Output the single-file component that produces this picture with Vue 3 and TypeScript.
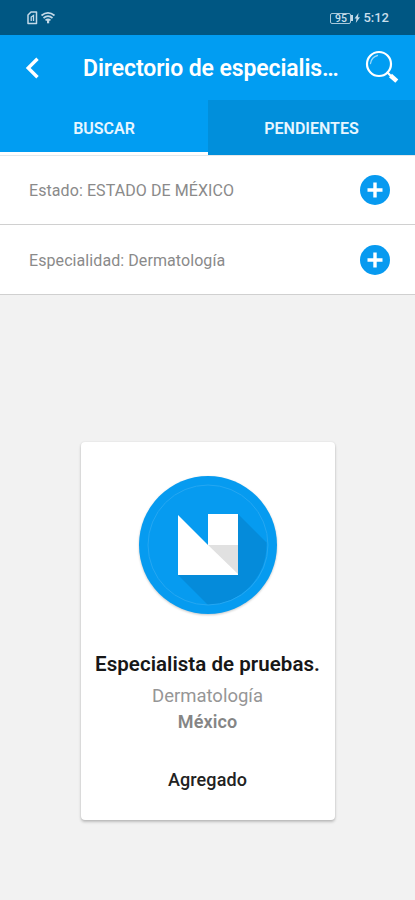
<script setup lang="ts">
import { ref } from 'vue'

type Tab = 'buscar' | 'pendientes'

interface Filter {
  label: string
  value: string
}

const activeTab = ref<Tab>('buscar')
const tabs: { id: Tab; label: string }[] = [
  { id: 'buscar', label: 'BUSCAR' },
  { id: 'pendientes', label: 'PENDIENTES' },
]
const filters: Filter[] = [
  { label: 'Estado', value: 'ESTADO DE MÉXICO' },
  { label: 'Especialidad', value: 'Dermatología' },
]
</script>

<template>
  <div class="screen">
    <div class="status">
      <svg class="status-left" width="30" height="14" viewBox="0 0 30 14" fill="none" stroke="#c3d9e8">
        <path d="M4 1h5.500v11.500h-8.500v-8.500z" stroke-width="1.500" stroke-linejoin="round" />
        <path d="M4.200 10V6L6.500 4.500V10" stroke-width="1.300" />
        <path d="M14.500 4.500Q21 -.8 27.500 4.500M16.500 7Q21 3.400 25.500 7M18.500 9.300Q21 7.300 23.500 9.300" stroke-width="1.700" />
        <path d="M20 8.500h2.200v3.800h-2.200z" fill="#c3d9e8" stroke="none" />
      </svg>
      <div class="status-right">
        <span class="battery">95</span>
        <svg width="10" height="10" viewBox="0 0 10 10" fill="#c3d9e8">
          <path d="M0 2h2v6H0zM7.500 0L3.500 5.500h2L4.800 10 9 4.200H7z" />
        </svg>
        <span class="clock">5:12</span>
      </div>
    </div>

    <header class="bar">
      <button class="icon-btn back" aria-label="Atrás">
        <svg width="16" height="24" viewBox="0 0 16 24" fill="none" stroke="#fff" stroke-width="3.400">
          <path d="M12.500 2.800L3.200 12l9.300 9.200" />
        </svg>
      </button>
      <h1 class="title">Directorio de especialis…</h1>
      <button class="icon-btn search" aria-label="Buscar">
        <svg width="36" height="36" viewBox="0 0 36 36" fill="none" stroke="#fff" stroke-linecap="round">
          <circle cx="14" cy="14" r="12" stroke-width="2.200" />
          <path d="M5.500 13.500Q6.500 7 12.500 5.500" stroke-width="1.300" opacity=".6" />
          <path d="M22.500 22.500l3 3" stroke-width="2.200" />
          <path d="M25.500 25.500l6.300 5.700" stroke-width="4.400" stroke-linecap="butt" />
        </svg>
      </button>
    </header>

    <nav class="tabs">
      <button
        v-for="tab in tabs"
        :key="tab.id"
        :class="['tab', tab.id, { active: tab.id === activeTab }]"
        @click="activeTab = tab.id"
      ><span>{{ tab.label }}</span></button>
    </nav>

    <div class="filters">
      <div v-for="filter in filters" :key="filter.label" class="filter">
        <span class="filter-text">{{ filter.label }}: {{ filter.value }}</span>
        <svg width="30" height="30" viewBox="0 0 30 30">
          <circle cx="15" cy="15" r="15" fill="#079af0" />
          <path d="M15 7.500v15M7.500 15h15" stroke="#fff" stroke-width="3.400" />
        </svg>
      </div>
    </div>

    <main class="content">
      <article class="card">
        <svg class="logo" width="144" height="146" viewBox="0 0 144 146">
          <circle class="logo-disc" cx="72" cy="72" r="69" fill="#069bf0" />
          <path d="M102 41L130.500 69.500A60 60 0 0 1 72 132L42 102z" fill="#058bda" />
          <circle cx="72" cy="72" r="60" fill="none" stroke="#25a7f2" stroke-width="1" />
          <path d="M42 42L72 72V41h30v61H42z" fill="#fff" />
          <path d="M72 72h30v29z" fill="#e1e1e1" />
        </svg>
        <h2 class="name">Especialista de pruebas.</h2>
        <p class="specialty">Dermatología</p>
        <p class="place">México</p>
        <button class="state">Agregado</button>
      </article>
    </main>
  </div>
</template>

<style>
body {
  margin: 0;
  background: #f2f2f2;
}
</style>

<style scoped>
.screen {
  display: flex;
  flex-direction: column;
  width: 415px;
  height: 900px;
  overflow: hidden;
  background: #f2f2f2;
  font-family: Roboto, 'Liberation Sans', sans-serif;
  white-space: nowrap;
}
button {
  margin: 0;
  padding: 0;
  border: 0;
  background: none;
  font: inherit;
  color: inherit;
}
h1, h2, p {
  margin: 0;
}
svg {
  display: block;
  flex: none;
}
.status {
  display: flex;
  align-items: center;
  justify-content: space-between;
  box-sizing: border-box;
  height: 35px;
  padding: 1px 26px 0 27px;
  background: #005783;
  color: #c9dfec;
}
.status-right {
  display: flex;
  align-items: center;
}
.battery {
  box-sizing: border-box;
  width: 21px;
  height: 11px;
  border: 1px solid #a9c8da;
  border-radius: 2px;
  font-size: 10.500px;
  font-weight: 500;
  line-height: 9px;
  text-align: center;
}
.clock {
  margin-left: 2px;
  font-size: 13px;
  font-weight: 500;
  line-height: 14px;
}
.bar {
  display: flex;
  align-items: center;
  height: 65px;
  background: #019df2;
  color: #fff;
}
.back {
  margin-left: 25px;
}
.title {
  width: 270px;
  margin-left: 42px;
  padding-top: 2px;
  font-size: 23px;
  font-weight: 600;
  letter-spacing: -0.1px;
  line-height: 28px;
}
.search {
  margin-left: 12px;
}
.tabs {
  display: grid;
  grid-template-columns: 208px 207px;
  height: 55px;
  background: #019df2;
}
.tab {
  padding-top: 2px;
  border-bottom: 0 solid #fff;
  color: #e8f6ff;
  font-size: 16px;
  font-weight: 600;
}
.tab:not(.active) {
  background: #018fdb;
}
.tab.active {
  padding-top: 4px;
  border-bottom-width: 3px;
}
.filters {
  background: #fff;
}
.filter {
  display: flex;
  align-items: center;
  justify-content: space-between;
  box-sizing: border-box;
  height: 70px;
  padding: 0 25px 0 29px;
  border-bottom: 1.500px solid #d0d0d0;
  color: #8a8a8a;
  font-size: 16px;
}
.filter-text {
  letter-spacing: 0.08px;
}
.filter:first-child {
  border-top: 1px solid #e5e8ea;
}
.filter:last-child {
  padding-top: 1px;
}
.content {
  display: flex;
  flex: 1;
  align-items: flex-start;
  justify-content: center;
  padding-top: 147px;
}
.card {
  display: flex;
  flex-direction: column;
  align-items: center;
  box-sizing: border-box;
  width: 254px;
  height: 378px;
  padding-top: 31px;
  border-radius: 4px;
  background: #fff;
  box-shadow: 0 2px 3px rgba(0, 0, 0, 0.22), 0 0 2px rgba(0, 0, 0, 0.1);
}
.logo-disc {
  filter: drop-shadow(0 1.500px 1px rgba(0, 0, 0, 0.22));
}
.name {
  margin-top: 32px;
  color: #171717;
  font-size: 20.500px;
  font-weight: 600;
  letter-spacing: 0.04px;
  line-height: 26px;
}
.specialty {
  margin-top: 7px;
  color: #969696;
  font-size: 18.500px;
  line-height: 25px;
}
.place {
  color: #858585;
  font-size: 18px;
  font-weight: 600;
  letter-spacing: 0.1px;
  line-height: 25px;
}
.state {
  margin-top: 34px;
  color: #222;
  font-size: 18px;
  font-weight: 500;
  letter-spacing: 0.1px;
  line-height: 24px;
}
</style>
